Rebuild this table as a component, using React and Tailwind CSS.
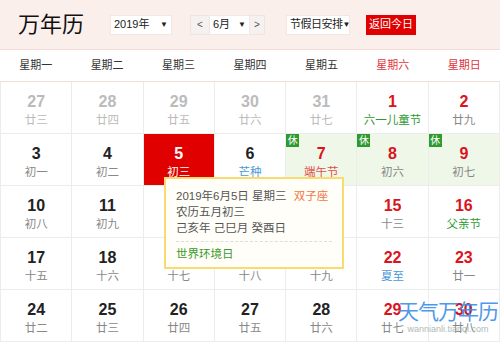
import React from "react";

const weekdays = ["星期一", "星期二", "星期三", "星期四", "星期五", "星期六", "星期日"];

// o = other month, w = weekend (red number), rest = 休 day
// sub: g = festival (green), b = solar term (blue), r = red
const rows = [
  [
    { d: 27, l: "廿三", o: true },
    { d: 28, l: "廿四", o: true },
    { d: 29, l: "廿五", o: true },
    { d: 30, l: "廿六", o: true },
    { d: 31, l: "廿七", o: true },
    { d: 1, l: "六一儿童节", w: true, sub: "g" },
    { d: 2, l: "廿九", w: true },
  ],
  [
    { d: 3, l: "初一" },
    { d: 4, l: "初二" },
    { d: 5, l: "初三", sel: true },
    { d: 6, l: "芒种", sub: "b" },
    { d: 7, l: "端午节", w: true, sub: "r", rest: true },
    { d: 8, l: "初六", w: true, rest: true },
    { d: 9, l: "初七", w: true, rest: true },
  ],
  [
    { d: 10, l: "初八" },
    { d: 11, l: "初九" },
    { d: 12, l: "初十" },
    { d: 13, l: "十一" },
    { d: 14, l: "十二" },
    { d: 15, l: "十三", w: true },
    { d: 16, l: "父亲节", w: true, sub: "g" },
  ],
  [
    { d: 17, l: "十五" },
    { d: 18, l: "十六" },
    { d: 19, l: "十七" },
    { d: 20, l: "十八" },
    { d: 21, l: "十九" },
    { d: 22, l: "夏至", w: true, sub: "b" },
    { d: 23, l: "廿一", w: true },
  ],
  [
    { d: 24, l: "廿二" },
    { d: 25, l: "廿三" },
    { d: 26, l: "廿四" },
    { d: 27, l: "廿五" },
    { d: 28, l: "廿六" },
    { d: 29, l: "廿七", w: true },
    { d: 30, l: "廿八", w: true },
  ],
];

const Cell = ({ c }) => {
  let bg = "bg-white";
  if (c.rest) bg = "bg-[#eef7e8]";
  if (c.sel) bg = "bg-[#e00000]";

  let numColor = "text-[#222]";
  if (c.o) numColor = "text-[#bbb]";
  else if (c.w) numColor = "text-[#d9141e]";
  if (c.sel) numColor = "text-white";

  let subColor = "text-[#888]";
  if (c.o) subColor = "text-[#bbb]";
  if (c.sub === "g") subColor = "text-[#2f9a2f]";
  if (c.sub === "b") subColor = "text-[#4a98d6]";
  if (c.sub === "r") subColor = "text-[#e0504a]";
  if (c.sel) subColor = "text-white";

  return (
    <div
      className={`relative h-[52px] border-r border-b border-[#ececec] flex flex-col items-center pt-[10px] ${bg}`}
    >
      {c.rest && (
        <span className="absolute left-0 top-0 w-[13px] h-[13px] bg-[#2f9a2f] text-white text-[10px] leading-[13px] text-center">
          休
        </span>
      )}
      <span className={`text-[16px] leading-[20px] font-bold ${numColor}`}>{c.d}</span>
      <span className={`text-[11.5px] leading-[16px] whitespace-nowrap ${subColor}`}>{c.l}</span>
    </div>
  );
};

const Select = ({ label, className }) => (
  <div
    className={`h-[20px] bg-white border border-[#f3e6e3] flex items-center justify-between px-[3px] text-[11px] text-[#222] whitespace-nowrap ${className}`}
  >
    <span>{label}</span>
    <span className="text-[8px]">▼</span>
  </div>
);

export default function App() {
  return (
    <div
      className="relative w-[500px] h-[342px] overflow-hidden bg-white"
      style={{ fontFamily: '"Liberation Sans", "Noto Sans CJK SC", sans-serif' }}
    >
      <div className="h-[50px] bg-[#fbefec] flex items-center border-b border-[#f3dcd8]">
        <h1 className="ml-[18px] text-[22px] text-[#111] leading-none w-[92px]">万年历</h1>
        <Select label="2019年" className="w-[62px]" />
        <div className="ml-[18px] flex h-[20px]">
          <div className="w-[20px] bg-[#f5f1f0] border border-[#f0e4e1] text-[10px] text-[#555] flex items-center justify-center">
            &lt;
          </div>
          <Select label="6月" className="w-[40px] border-l-0" />
          <div className="w-[15px] bg-[#f5f1f0] border border-l-0 border-[#f0e4e1] text-[10px] text-[#555] flex items-center justify-center">
            &gt;
          </div>
        </div>
        <Select label="节假日安排" className="ml-[21px] w-[64px] px-[2px] tracking-[-0.5px]" />
        <button className="ml-[16px] h-[20px] w-[50px] bg-[#e00000] text-white text-[11px] whitespace-nowrap">
          返回今日
        </button>
      </div>

      <div className="grid grid-cols-7 h-[32px] border-b border-[#f3dcd8] items-center">
        {weekdays.map((w, i) => (
          <div
            key={w}
            className={`text-center text-[11px] ${i >= 5 ? "text-[#e0343a]" : "text-[#333]"}`}
          >
            {w}
          </div>
        ))}
      </div>

      <div className="grid grid-cols-7 border-l border-[#ececec]">
        {rows.flat().map((c, i) => (
          <Cell key={i} c={c} />
        ))}
      </div>

      <div className="absolute left-[164px] top-[177px] w-[180px] h-[92px] border-2 border-[#f8dc70] bg-[#fffef9] pl-[10px] pt-[9px] text-[11.5px] text-[#555] leading-[16px] whitespace-nowrap">
        <div>
          2019年6月5日 星期三 <span className="ml-[4px] text-[#f07840]">双子座</span>
        </div>
        <div>农历五月初三</div>
        <div>己亥年 己巳月 癸酉日</div>
        <div className="mt-[5px] mr-[10px] border-t border-dashed border-[#ddd] pt-[4px] text-[#3a9a2a]">
          世界环境日
        </div>
      </div>

      <div className="absolute left-[398px] top-[300px] flex flex-col items-center pointer-events-none whitespace-nowrap">
        <span className="text-[21px] leading-[24px] text-[#3d8ee8] opacity-90 tracking-[-1px]">
          天气万年历
        </span>
        <span className="text-[9px] leading-[10px] text-[#9aa] opacity-80">wannianli.tianqi.com</span>
      </div>
    </div>
  );
}
